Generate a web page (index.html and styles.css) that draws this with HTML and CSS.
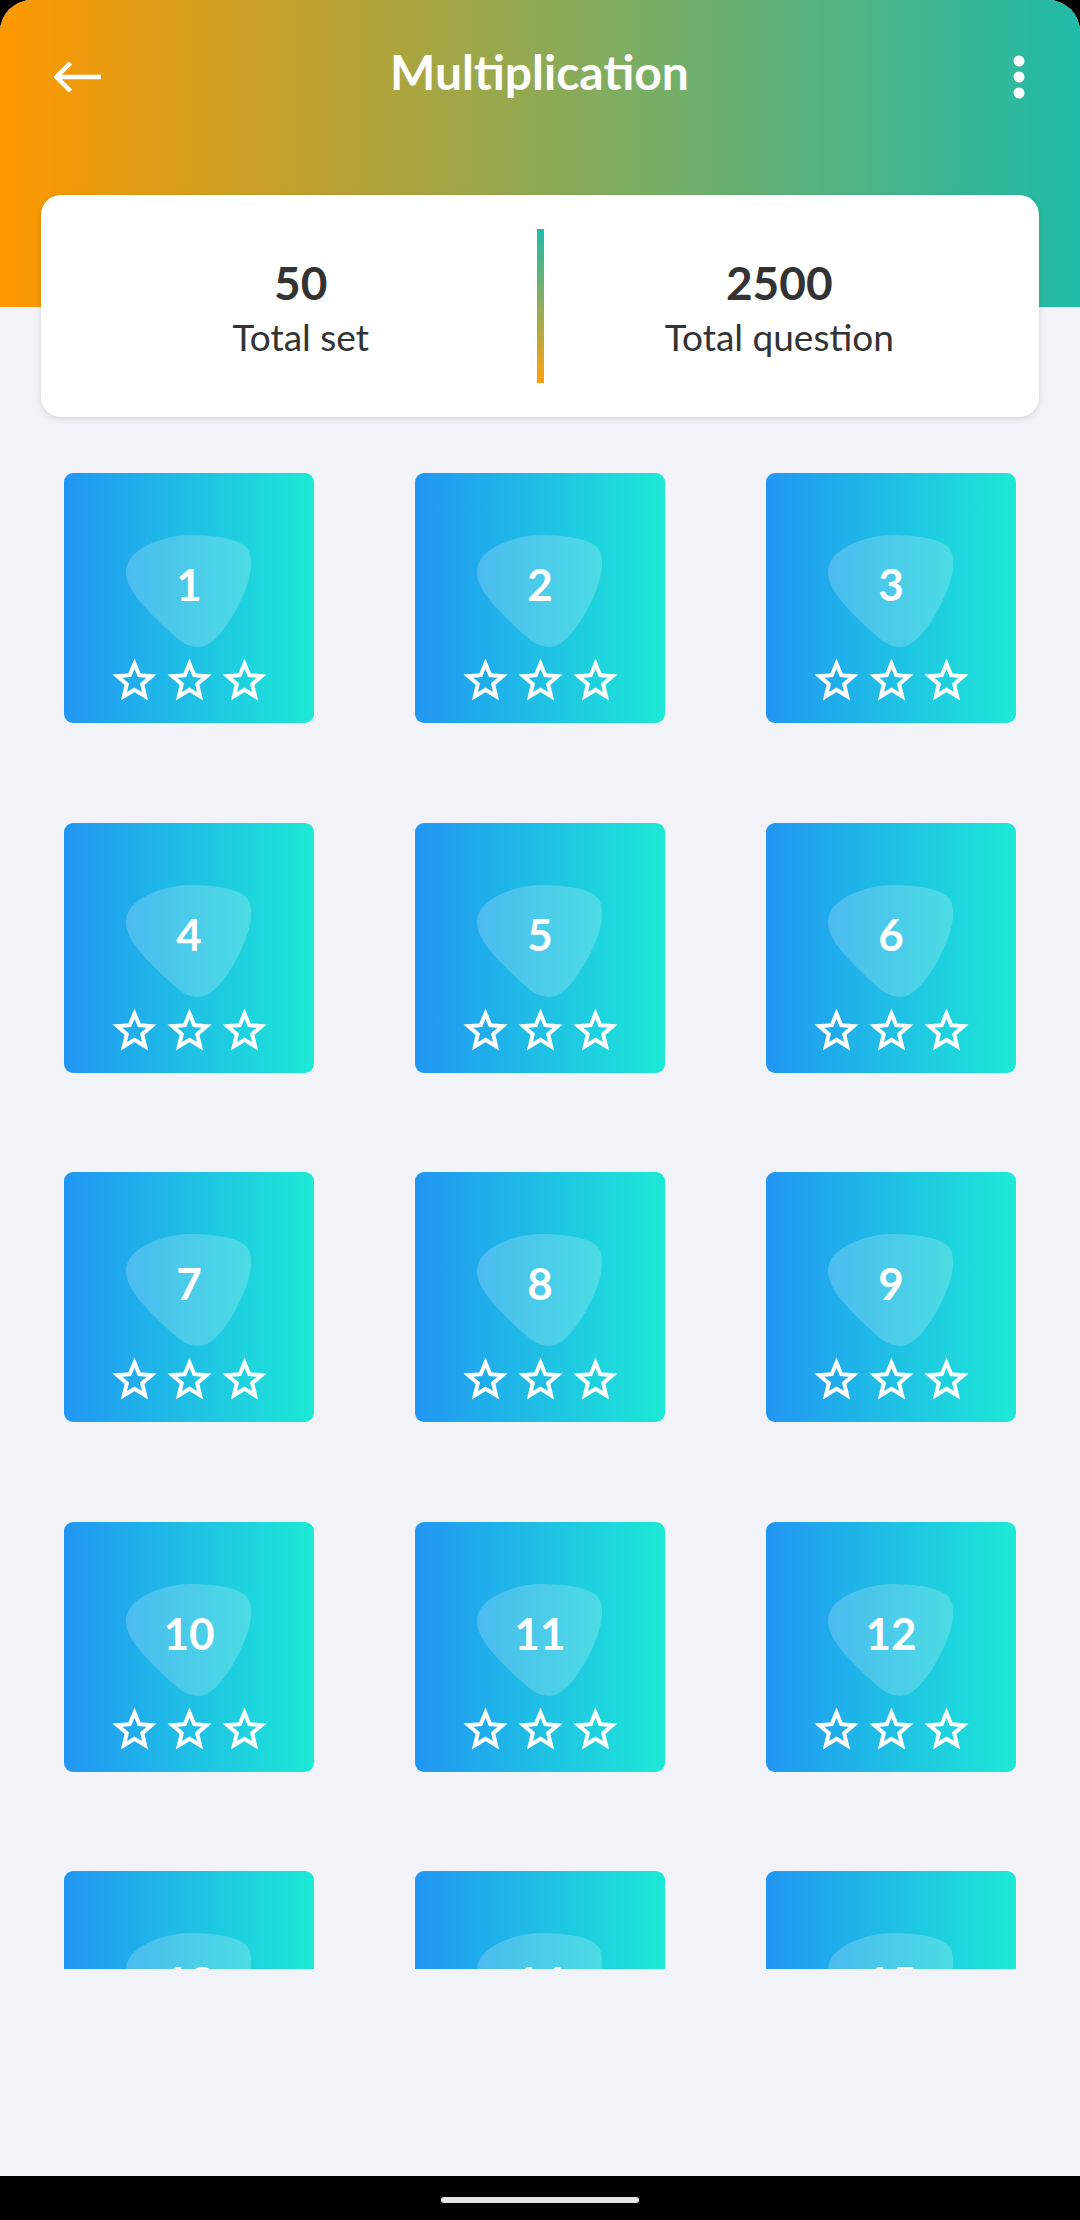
FILE: index.html
```html
<!DOCTYPE html>
<html lang="en">
<head>
    <meta charset="UTF-8">
    <meta name="viewport" content="width=device-width, initial-scale=1.0">
    <title>Multiplication</title>
    <link rel="stylesheet" href="styles.css">
</head>
<body>
    <div class="screen">
        <div class="top">
            <div class="appbar">
                <div class="side">
                    <svg class="back-btn" width="48" height="30" viewBox="0 0 48 30">
                        <path d="M2 15 H47 M16.5 1 L2.5 15 L16.5 29" fill="none" stroke="#fff" stroke-width="4.5"/>
                    </svg>
                </div>
                <div class="title">Multiplication</div>
                <div class="side side-right">
                    <svg class="menu-btn" width="12" height="44" viewBox="0 0 12 44">
                        <circle cx="6" cy="6" r="5.5" fill="#fff"/>
                        <circle cx="6" cy="22" r="5.5" fill="#fff"/>
                        <circle cx="6" cy="38" r="5.5" fill="#fff"/>
                    </svg>
                </div>
            </div>

            <div class="stats">
                <div class="stat">
                    <div class="stat-value">50</div>
                    <div class="stat-label">Total set</div>
                </div>
                <div class="divider"></div>
                <div class="stat">
                    <div class="stat-value">2500</div>
                    <div class="stat-label">Total question</div>
                </div>
            </div>
        </div>

        <div class="sets" id="sets">
            <!-- tiles are built in the script below -->
        </div>

        <div class="spacer"></div>
    </div>

    <div class="navbar">
        <div class="handle"></div>
    </div>

    <script>
        const blob = '<svg class="blob" width="126" height="112" viewBox="0 0 126 112"><path d="M2 28 C8 12, 40 0, 64 0 C90 0, 112 4, 120 12 C128 20, 126 40, 118 58 C110 78, 96 100, 84 108 C74 115, 62 112, 52 104 C36 90, 12 68, 4 52 C-1 42, -1 34, 2 28 Z" fill="rgba(255,255,255,0.2)"/></svg>';
        const star = '<svg width="45" height="43" viewBox="-22.5 -23.7 45 43"><polygon points="0,-18 4.76,-6.55 17.12,-5.56 7.7,2.5 10.58,14.56 0,8.1 -10.58,14.56 -7.7,2.5 -17.12,-5.56 -4.76,-6.55" fill="none" stroke="#fff" stroke-width="4" stroke-linejoin="miter"/></svg>';

        const sets = document.getElementById('sets');
        let html = '';
        for (let i = 1; i <= 15; i++) {
            html += `<div class="tile">
                <div class="badge">${blob}<span class="num">${i}</span></div>
                <div class="stars">${star}${star}${star}</div>
            </div>`;
        }
        sets.innerHTML = html;
    </script>
</body>
</html>
```

FILE: styles.css
```css
html {
    background: #000;
}

body {
    margin: 0;
    width: 1080px;
    height: 2220px;
    font-family: Lato, "Open Sans", sans-serif;
    overflow: hidden;
}

.screen {
    height: 2176px;
    background-color: #f1f3f8;
    border-radius: 32px 32px 0 0;
    overflow: hidden;
    display: flex;
    flex-direction: column;
}

.top {
    background: linear-gradient(90deg, #ff9800 0%, #20bba8 100%) no-repeat;
    background-size: 100% 307px;
}

.appbar {
    height: 154px;
    display: flex;
    align-items: center;
    padding: 0 55px 0 54px;
}

.side {
    width: 60px;
    display: flex;
}

.side-right {
    justify-content: flex-end;
}

.back-btn,
.menu-btn {
    display: block;
}

.title {
    flex: 1;
    text-align: center;
    color: #fff;
    font-size: 48px;
    font-weight: bold;
    padding-bottom: 12px;
}

.stats {
    margin: 41px 41px 0;
    height: 222px;
    box-sizing: border-box;
    padding: 34px 24px;
    background-color: #fff;
    border-radius: 20px;
    box-shadow: 0 2px 6px rgba(0, 0, 0, 0.12);
    display: flex;
}

.stat {
    flex: 1;
    display: flex;
    flex-direction: column;
    align-items: center;
    justify-content: center;
    color: #333;
    padding-top: 4px;
}

.stat-value {
    font-size: 46px;
    font-weight: bold;
    line-height: 52px;
}

.stat-label {
    font-size: 37px;
    line-height: 44px;
    margin-top: 6px;
}

.divider {
    width: 7px;
    background: linear-gradient(180deg, #20bba8, #ff9f10);
}

.sets {
    margin-top: 56px;
    height: 1496px;
    overflow: hidden;
    padding: 0 64px;
    display: grid;
    grid-template-columns: repeat(3, 250px);
    grid-auto-rows: 250px;
    justify-content: space-between;
    row-gap: 99.5px;
    align-content: start;
}

.tile {
    border-radius: 9px;
    background: linear-gradient(90deg, #2196f3 0%, #1de9d6 100%);
    display: flex;
    flex-direction: column;
    align-items: center;
    padding-top: 62px;
    box-sizing: border-box;
}

.badge {
    position: relative;
    width: 126px;
    height: 112px;
    display: flex;
    align-items: center;
    justify-content: center;
}

.blob {
    position: absolute;
    top: 0;
    left: 0;
}

.num {
    position: relative;
    color: #fff;
    font-size: 44px;
    font-weight: bold;
    padding-bottom: 14px;
}

.stars {
    margin-top: 11px;
    display: flex;
    gap: 10px;
}

.stars svg {
    display: block;
}

.spacer {
    flex: 1;
}

.navbar {
    height: 44px;
    background: #000;
    display: flex;
    justify-content: center;
    padding-top: 21px;
    box-sizing: border-box;
}

.handle {
    width: 198px;
    height: 6px;
    border-radius: 3px;
    background: #e6e6e6;
}
```
